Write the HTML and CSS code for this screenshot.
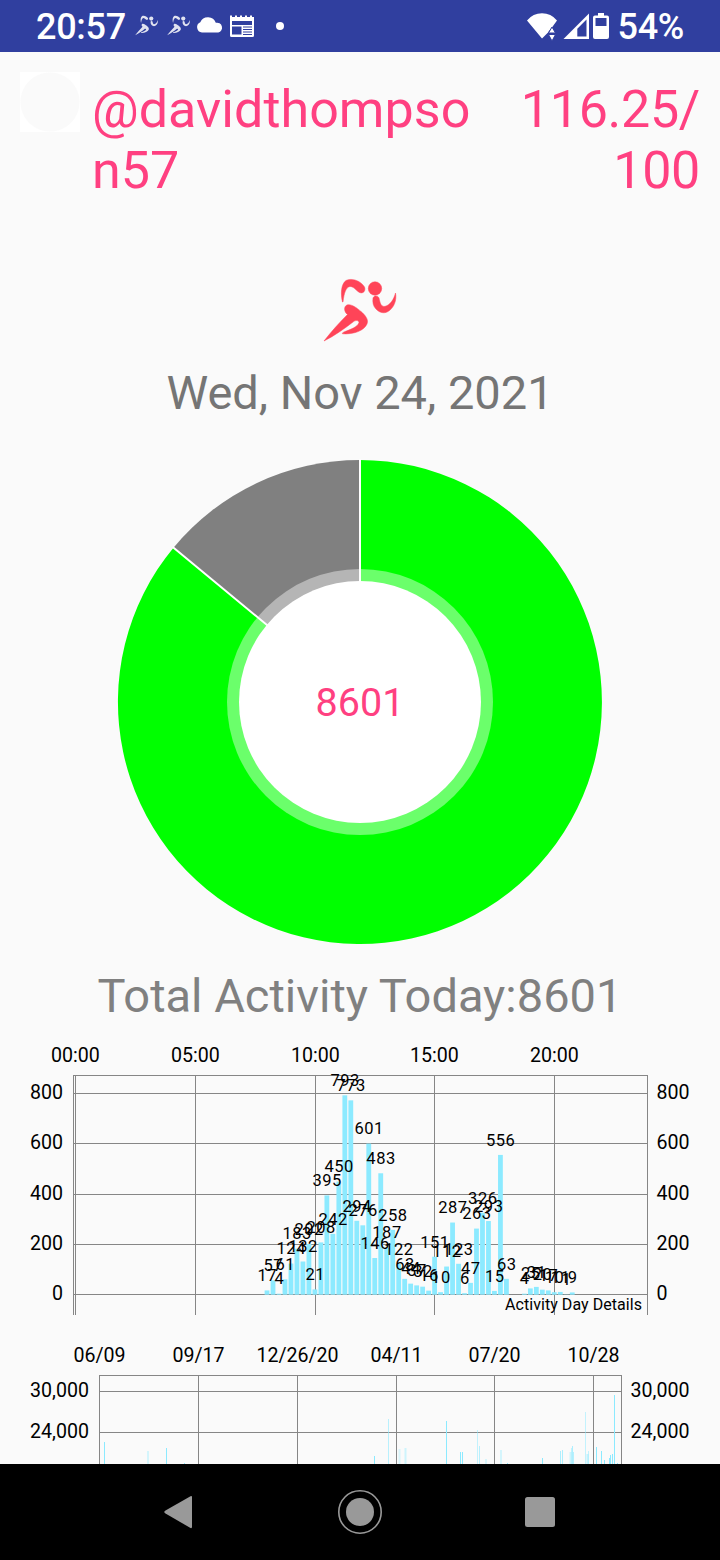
FILE: index.html
```
<!DOCTYPE html>
<html lang="en">
<head>
    <meta charset="UTF-8">
    <meta name="viewport" content="width=device-width, initial-scale=1.0">
    <title>Activity Tracker</title>
    <link rel="stylesheet" href="styles.css">
</head>
<body>
    <svg class="sprite" aria-hidden="true">
        <symbol id="runner" viewBox="0 0 120 100">
            <path d="M42.5 42C40.500 34 41 24 46 20.500C52 17.500 61 21 64.500 27C66 31 63 34 59.500 32.500C56 30.500 54 26.500 50 26.500C46 27 44 33 43 42Z"/>
            <circle cx="75" cy="28.500" r="6.700"/>
            <path d="M73 38C74 35 78 35.500 79 38C80 42 80.500 46 84 46.500C90 46 94 39 95.500 33C97 40 94 48 88 51.500C84 54 79 52.500 76 49C73 46 72.500 42 73 38Z"/>
            <path d="M24 81C31 72 39 63 47.500 54.500C44 52 43.500 46.500 47 45C51 43.500 57 48 61 51.500C65 55 69 59.500 67 64C64 71 53 74.500 42.500 73.800C42 73 43 72.500 44 72C50 69.500 58 67 59 62.500C58.500 60 55.500 60 53 62C44 69 34 76 24 81Z"/>
        </symbol>
    </svg>

    <div class="status-bar">
        <span class="time">20:57</span>
        <svg class="notif-icons" viewBox="130 0 160 52">
            <use href="#runner" x="127.500" y="9.500" width="38" height="31.700" opacity="0.85"/>
            <use href="#runner" x="159.500" y="9.500" width="38" height="31.700" opacity="0.85"/>
            <path d="M202 32.500A5.400 5.400 0 0 1 200.300 22.200A8.300 8.300 0 0 1 215.800 22.800A5 5 0 0 1 218.300 32.500Z"/>
            <path fill-rule="evenodd" d="M230 15.500H232V17H235V15.500H237V17H240V15.500H242V17H245V15.500H247V17H250V15.500H252V17H254V35.500Q254 37 252.500 37H231.500Q230 37 230 35.500ZM232 21V25H252V21ZM232 26.500V34.500H241.500V26.500ZM243 26.500V27.500H252V26.500ZM243 29V30H252V29ZM243 31.500V32.500H252V31.500ZM243 34V35H252V34Z"/>
            <circle cx="280" cy="26" r="4"/>
        </svg>
        <svg class="system-icons" viewBox="525 0 90 52">
            <path d="M528 20.500Q534 13.300 543 13.300T558 20.500L553.300 27L549.500 31.500V32L543 38.500Z"/>
            <path class="arrows" d="M553 27L556.500 33H549.500ZM549.500 34.500H556.500L553 41Z"/>
            <path fill-rule="evenodd" d="M564.500 39L590 13.500V39ZM578.300 36.500H587.500V19.500L578.300 28.700Z"/>
            <path fill-rule="evenodd" d="M599 13H605V15.500H608Q610 15.500 610 17.500V37Q610 39 608 39H596Q594 39 594 37V17.500Q594 15.500 596 15.500H599ZM596.500 18V26H607.500V18Z"/>
        </svg>
        <span class="battery">54%</span>
    </div>

    <div class="content">
        <div class="header">
            <div class="avatar"></div>
            <div class="username">@davidthompson57</div>
            <div class="reward">116.25/<br>100</div>
        </div>

        <svg class="logo"><use href="#runner"/></svg>
        <div class="date">Wed, Nov 24, 2021</div>

        <svg class="donut" viewBox="-242 -242 484 484">
            <path class="done" d="M0 0V-242A242 242 0 1 1 -186.500 -154.300Z"/>
            <path class="left" d="M0 0L-186.500 -154.300A242 242 0 0 1 0 -242Z"/>
            <path class="gap" d="M0 0V-243M0 0L-187.300 -155"/>
            <circle class="ring" r="133"/>
            <circle class="hole" r="121"/>
            <text class="count" y="14">8601</text>
        </svg>

        <div class="total">Total Activity Today:8601</div>

        <svg class="chart day-chart" id="dayChart" viewBox="0 0 720 300"></svg>
        <svg class="chart history-chart" id="historyChart" viewBox="0 0 720 134"></svg>
    </div>

    <div class="nav-bar">
        <svg viewBox="0 0 60 60"><path d="M15.500 28.500L40.500 14.300Q42 13.500 42 15V45Q42 46.500 40.500 46L15.500 31.500Q13 30 15.500 28.500Z"/></svg>
        <svg viewBox="0 0 60 60"><circle cx="30" cy="30" r="14"/><circle class="outline" cx="30" cy="30" r="21.200"/></svg>
        <svg viewBox="0 0 60 60"><rect x="15" y="15" width="30" height="30" rx="2.500"/></svg>
    </div>

    <script>
        function add(svg, tag, attrs, text) {
            const el = document.createElementNS('http://www.w3.org/2000/svg', tag);
            for (const key in attrs) el.setAttribute(key, attrs[key]);
            if (text !== undefined) el.textContent = text;
            svg.appendChild(el);
        }

        // Grid lines and axis labels, rows and cols are [position, label]
        function drawGrid(svg, box, rows, cols) {
            const width = box.right - box.left + 1;
            const height = box.bottom - box.top;
            add(svg, 'rect', { class: 'grid', x: box.left, y: box.top, width: width, height: 1 });
            add(svg, 'rect', { class: 'grid', x: box.left, y: box.top, width: 1, height: height });
            add(svg, 'rect', { class: 'grid', x: box.right, y: box.top, width: 1, height: height });
            rows.forEach(([y, label]) => {
                add(svg, 'rect', { class: 'grid', x: box.left, y: y, width: width, height: 1 });
                add(svg, 'text', { class: 'axis axis-left', x: box.left - 10, y: y + 6.3 }, label);
                add(svg, 'text', { class: 'axis', x: box.right + 9.5, y: y + 6.3 }, label);
            });
            cols.forEach(([x, label]) => {
                add(svg, 'rect', { class: 'grid', x: x, y: box.top, width: 1, height: height });
                add(svg, 'text', { class: 'axis axis-top', x: x + 0.5, y: 32 }, label);
            });
        }

        // Steps for every 15 minutes, starting at 08:00
        const steps = [17, 57, 4, 61, 124, 183, 132, 202, 21, 208, 395, 242, 450, 793, 773, 294,
            276, 601, 146, 483, 187, 258, 122, 63, 44, 37, 32, 16, 151, 10, 112, 287,
            123, 6, 47, 263, 326, 293, 15, 556, 63, 0, 0, 4, 25, 31, 20, 17, 10, 11, 1, 9];

        const day = document.getElementById('dayChart');
        drawGrid(day, { left: 73, right: 647, top: 45, bottom: 285 },
            [[63, '800'], [113, '600'], [164, '400'], [214, '200'], [264, '0']],
            [[75, '00:00'], [195, '05:00'], [315, '10:00'], [434, '15:00'], [554, '20:00']]);

        const points = steps.map((value, i) => ({
            value: value,
            x: 75.5 + (i + 32) * 5.985,
            y: 264.7 - value * 0.2514
        })).filter(p => p.value > 0);
        points.forEach(p => add(day, 'rect', { class: 'bar', x: p.x - 2.4, y: p.y, width: 4.8, height: 264.7 - p.y }));
        points.forEach(p => add(day, 'text', { class: 'value', x: p.x + 0.3, y: p.y - 9.2 }, p.value));
        add(day, 'text', { class: 'caption', x: 642, y: 280 }, 'Activity Day Details');

        // Daily totals: x, top, width, opacity
        const totals = [[104, 112, 1, 1], [147, 121, 2, .35], [166, 118, 1, 1], [184, 133, 1, 1],
            [374, 126, 1, 1], [388, 89, 1, .6], [398.5, 119, 2, .3], [404.5, 118, 2, .4],
            [446, 91, 1, 1], [460, 122, 1, 1], [462, 122, 1, 1], [477, 100, 1, .5],
            [479, 116, 1, .6], [485, 129, 2, .3], [500, 120, 2, .35], [507, 133, 1, 1],
            [542, 128, 1, 1], [560, 121, 1, .7], [562, 120, 1, .7], [569.5, 122, 2, .4],
            [571, 118, 1, .5], [572, 116, 1, .7], [573, 122, 1, .6], [585, 82, 1, .5],
            [586.5, 124, 2, .5], [588, 121, 1, .5], [596, 117, 1, 1], [601, 121, 1, 1],
            [604, 130, 1, 1], [609, 128, 1, 1], [610, 125, 1, 1], [612, 124, 1, 1],
            [614, 65, 1, 1], [617, 133, 1, 1]];

        const history = document.getElementById('historyChart');
        drawGrid(history, { left: 99, right: 621, top: 45, bottom: 134 },
            [[61, '30,000'], [102, '24,000']],
            [[99, '06/09'], [198, '09/17'], [297, '12/26/20'], [396, '04/11'], [494, '07/20'], [593, '10/28']]);
        totals.forEach(([x, y, w, o]) => add(history, 'rect', { class: 'bar', x: x, y: y, width: w, height: 134 - y, opacity: o }));
    </script>
</body>
</html>
```
FILE: styles.css
```
body {
    display: flex;
    flex-direction: column;
    width: 720px;
    height: 1560px;
    margin: 0;
    overflow: hidden;
    background-color: #fafafa;
    font-family: Roboto, sans-serif;
}
svg {
    display: block;
}
.sprite {
    position: absolute;
    width: 0;
    height: 0;
}
.status-bar {
    display: flex;
    align-items: center;
    flex: none;
    height: 52px;
    box-sizing: border-box;
    padding: 0 36px 0 36px;
    background-color: #303f9f;
    color: #fff;
    font-size: 36px;
    font-weight: 500;
    letter-spacing: -0.3px;
    line-height: 52px;
}
.status-bar svg {
    fill: #fff;
    height: 52px;
}
.time {
    width: 94px;
    padding-top: 2px;
}
.notif-icons {
    width: 160px;
}
.system-icons {
    width: 90px;
    margin-left: auto;
}
.arrows {
    stroke: #303f9f;
    stroke-width: 1;
}
.battery {
    padding: 2px 0 0 3px;
}
.content {
    display: flex;
    flex-direction: column;
    align-items: center;
    flex: 1;
    min-height: 0;
    overflow: hidden;
}
.header {
    display: flex;
    flex: none;
    width: 680px;
    height: 199px;
    padding-top: 20px;
    color: #ff4081;
    font-size: 52px;
    line-height: 61px;
}
.avatar {
    width: 60px;
    height: 60px;
    background: radial-gradient(circle, #fafafa 29px, #fff 30px);
}
.username {
    width: 390px;
    margin-left: 12px;
    padding-top: 7px;
    letter-spacing: 0.05px;
    word-break: break-all;
}
.reward {
    flex: 1;
    padding-top: 7px;
    letter-spacing: -0.3px;
    text-align: right;
}
.logo {
    flex: none;
    width: 120px;
    height: 100px;
    margin-top: -11px;
    fill: #ff4458;
    stroke: #ff4458;
    stroke-width: 0.5;
}
.date, .total {
    flex: none;
    color: #757575;
    font-size: 47px;
    line-height: 56px;
}
.date {
    margin-top: 5px;
}
.donut {
    flex: none;
    width: 484px;
    height: 484px;
    margin-top: 39px;
    overflow: visible;
}
.done {
    fill: #00ff00;
}
.left {
    fill: #808080;
}
.gap {
    stroke: #fff;
    stroke-width: 2;
}
.ring {
    fill: #fff;
    opacity: 0.42;
}
.hole {
    fill: #fff;
}
.count {
    fill: #ff4081;
    font-size: 39.5px;
    text-anchor: middle;
}
.total {
    margin-top: 24px;
    color: #808080;
}
.chart {
    flex: none;
    width: 720px;
}
.day-chart {
    height: 300px;
    margin-top: 6px;
}
.history-chart {
    height: 134px;
}
.grid {
    fill: #868686;
}
.bar {
    fill: #8ceaff;
}
.axis {
    font-size: 19.6px;
}
.axis-left, .caption {
    text-anchor: end;
}
.axis-top, .value {
    text-anchor: middle;
}
.value {
    font-size: 16.5px;
    letter-spacing: 0.5px;
}
.caption {
    font-size: 16px;
    letter-spacing: 0.05px;
}
.nav-bar {
    display: flex;
    justify-content: center;
    align-items: center;
    gap: 120px;
    flex: none;
    height: 96px;
    background-color: #000;
}
.nav-bar svg {
    width: 60px;
    height: 60px;
    fill: #999;
}
.nav-bar .outline {
    fill: none;
    stroke: #999;
    stroke-width: 1.6;
}
```
